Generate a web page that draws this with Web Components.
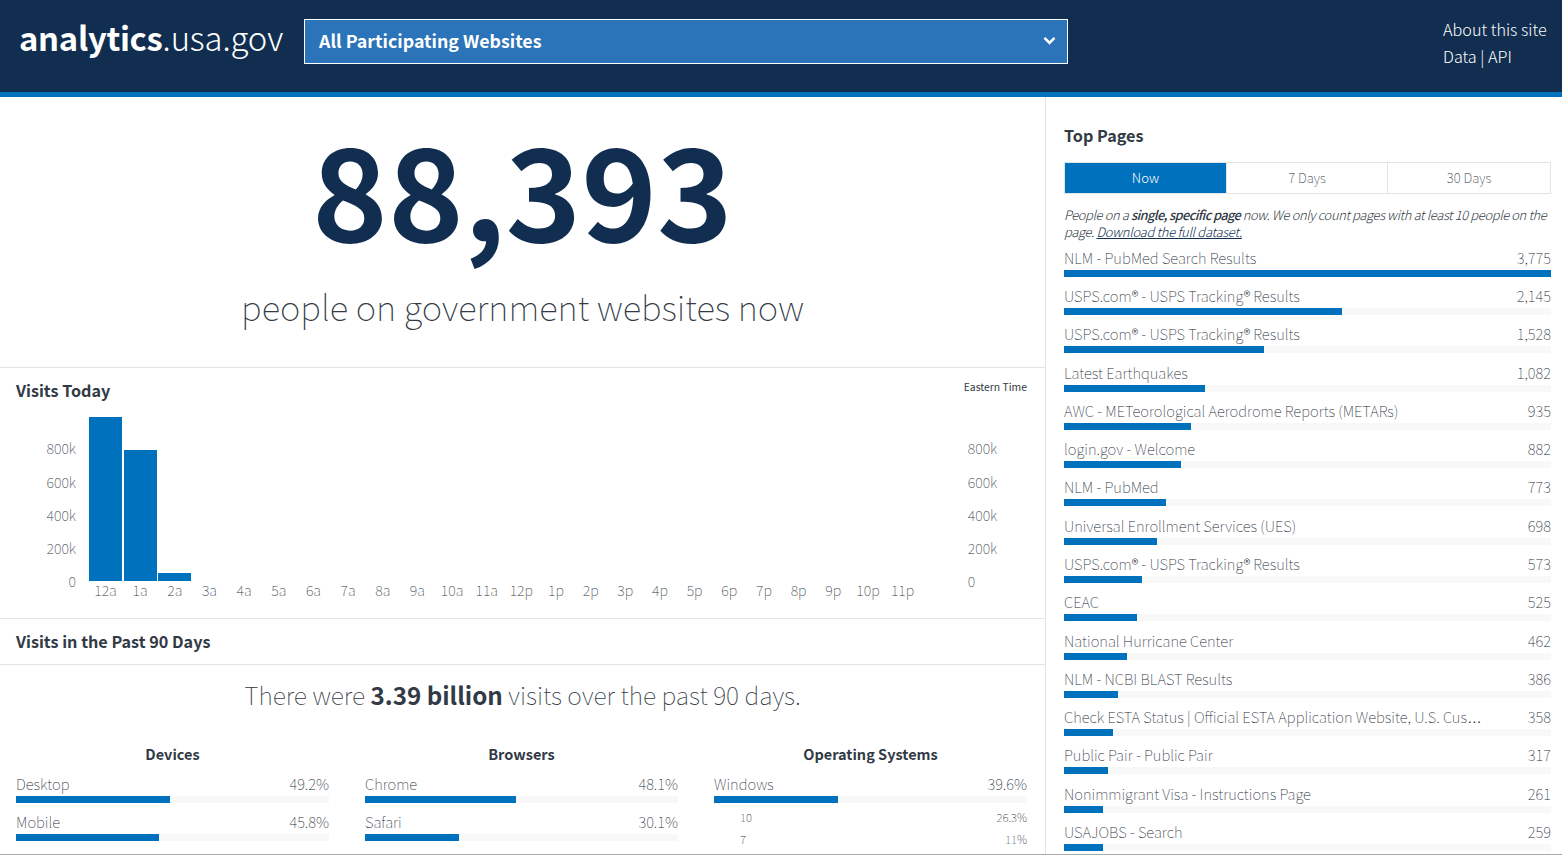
<!DOCTYPE html>
<html lang="en">
<head>
<meta charset="utf-8">
<title>analytics.usa.gov</title>
<style>
  html, body { margin: 0; height: 855px; overflow: hidden; background: #fff; }
  body { font-family: "Noto Sans CJK SC", "Open Sans", sans-serif; color: #323a45; }
</style>
</head>
<body>
<analytics-app></analytics-app>
<script>
const define = (name, css, html, init) => {
  const template = document.createElement('template')
  template.innerHTML = `<style>${css}</style>${html}`
  window.customElements.define(name, class extends HTMLElement {
    constructor () {
      super()
      this.attachShadow({ mode: 'open' })
      this.shadowRoot.appendChild(template.content.cloneNode(true))
    }
    connectedCallback () {
      if (init) init(this, this.shadowRoot)
    }
  })
}

define('site-header', `
  :host { display: flex; height: 92px; border-bottom: 5px solid #0071bc; background: #112e51; color: #fff; padding: 0 15px 0 19px; align-items: flex-start; }
  .logo { font-size: 32.8px; line-height: 40px; margin-top: 17px; width: 285px; white-space: nowrap; font-weight: 300; letter-spacing: -.1px; }
  .logo b { font-weight: 700; letter-spacing: -.3px; }
  .select { box-sizing: border-box; width: 764px; height: 45px; margin-top: 19px; border: 1px solid #fff; background: #2b74b9; display: flex; align-items: center; justify-content: space-between; padding: 0 11px 3px 14px; font-weight: 700; font-size: 17.8px; }
  nav { margin-left: auto; width: 104px; font-size: 16.2px; line-height: 27px; padding-top: 16px; font-weight: 300; white-space: nowrap; }
`, `
  <div class="logo"><b>analytics</b>.usa.gov</div>
  <div class="select"><span>All Participating Websites</span>
    <svg width="13" height="9" viewBox="0 0 13 9"><path d="M1.5 1.8 6.5 6.8 11.5 1.8" fill="none" stroke="#fff" stroke-width="2.6"/></svg>
  </div>
  <nav>About this site<br>Data | API</nav>
`)

define('hero-count', `
  :host { display: block; height: 271px; text-align: center; box-sizing: border-box; border-bottom: 1px solid #e4e4e4; }
  .num { font-size: 128.5px; line-height: 150px; font-weight: 700; color: #112e51; padding-top: 14px; }
  .label { font-size: 34.7px; line-height: 48px; font-weight: 100; margin-top: 21px; color: #323a45; }
`, `
  <div class="num">88,393</div>
  <div class="label">people on government websites now</div>
`)

define('section-title', `
  :host { display: block; font-weight: 700; font-size: 16.2px; line-height: 24px; color: #323a45; }
`, `<slot></slot>`)

define('visits-chart', `
  :host { display: block; height: 251px; box-sizing: border-box; border-bottom: 1px solid #e4e4e4; padding: 10px 16px 0; position: relative; }
  .tz { position: absolute; top: 11px; right: 18px; font-size: 10.4px; line-height: 16px; }
  .plot { display: grid; grid-template-columns: 73px repeat(24, 34.67px) 1fr; margin-top: 13px; height: 164px; font-size: 14.3px; font-weight: 100; color: #323a45; }
  .axis { display: flex; flex-direction: column; justify-content: flex-end; align-items: flex-end; padding-right: 13px; }
  .axis.r { grid-column: 26; align-items: flex-start; padding-left: 47px; padding-right: 0; }
  .axis span { height: 33px; line-height: 33px; transform: translateY(16px); }
  .axis span:first-child { margin-bottom: 1px; }
  .slot { display: flex; align-items: flex-end; padding-right: 1.67px; }
  .slot i { display: block; width: 100%; background: #0071bc; }
  .labels { display: grid; grid-template-columns: 73px repeat(24, 34.67px); margin-top: 1px; font-size: 14.3px; line-height: 20px; font-weight: 100; color: #323a45; text-align: center; }
  .labels span { padding-right: 1.67px; }
`, `
  <section-title>Visits Today</section-title>
  <div class="tz">Eastern Time</div>
  <div class="plot"></div>
  <div class="labels"></div>
`, (el, root) => {
  const ticks = ['800k', '600k', '400k', '200k', '0']
  const heights = [164, 131, 8]
  const hours = ['12a', '1a', '2a', '3a', '4a', '5a', '6a', '7a', '8a', '9a', '10a', '11a', '12p', '1p', '2p', '3p', '4p', '5p', '6p', '7p', '8p', '9p', '10p', '11p']
  const axis = cls => `<div class="axis ${cls}">${ticks.map(t => `<span>${t}</span>`).join('')}</div>`
  root.querySelector('.plot').innerHTML = axis('') +
    hours.map((h, i) => `<div class="slot"><i style="height:${heights[i] || 0}px"></i></div>`).join('') + axis('r')
  root.querySelector('.labels').innerHTML = '<div></div>' + hours.map(h => `<span>${h}</span>`).join('')
})

define('bar-row', `
  :host { display: block; font-weight: 100; color: #29303b; font-size: 14.8px; margin-bottom: var(--row-gap, 0); }
  .row { display: flex; justify-content: space-between; line-height: 20px; height: 22px; }
  .name { white-space: nowrap; }
  .track { height: 7px; background: #f8f8f8; }
  .fill { height: 100%; background: #0071bc; }
  :host([sub]) { font-size: 11.4px; margin-top: -3px; }
  :host([sub]) .row { height: 16px; line-height: 16px; }
  :host([sub]) .name { padding-left: 26px; }
`, `
  <div class="row"><span class="name"><slot></slot></span><span class="val"></span></div>
  <div class="track"><div class="fill"></div></div>
`, (el, root) => {
  root.querySelector('.val').textContent = el.getAttribute('value')
  const track = root.querySelector('.track')
  if (el.hasAttribute('sub')) track.remove()
  else root.querySelector('.fill').style.width = el.getAttribute('pct') + '%'
})

define('breakdown-col', `
  :host { display: block; width: 313px; --row-gap: 9px; }
  h4 { margin: 0 0 10px; font-size: 14.5px; line-height: 20px; font-weight: 700; text-align: center; color: #323a45; }
`, `<h4></h4><slot></slot>`, (el, root) => {
  root.querySelector('h4').textContent = el.getAttribute('title')
})

define('past-visits', `
  :host { display: block; overflow: hidden; }
  .head { padding: 10px 16px 11px; border-bottom: 1px solid #e4e4e4; }
  p { margin: 12px 0 0; text-align: center; font-size: 24.8px; line-height: 34px; font-weight: 100; }
  p b { font-weight: 700; font-size: 24.2px; }
  .cols { display: flex; gap: 36px; padding: 32px 16px 0; }
`, `
  <div class="head"><section-title>Visits in the Past 90 Days</section-title></div>
  <p>There were <b>3.39 billion</b> visits over the past 90 days.</p>
  <div class="cols"><slot></slot></div>
`)

define('top-tabs', `
  :host { display: grid; grid-template-columns: 161px 161px 1fr; border: 1px solid #e4e4e4; height: 30px; font-size: 13.2px; font-weight: 100; color: #29303b; }
  span { display: flex; align-items: center; justify-content: center; border-left: 1px solid #e4e4e4; padding-bottom: 2px; }
  span:first-of-type { background: #0071bc; color: #fff; border-left: 0; font-weight: 300; }
`, `<span>Now</span><span>7 Days</span><span>30 Days</span>`)

define('top-pages', `
  :host { display: block; padding: 26px 11px 0 18px; overflow: hidden; --row-gap: 9.27px; }
  .note { font-size: 12.9px; line-height: 17px; font-style: italic; font-weight: 300; margin: 12px 0 7.85px; letter-spacing: -.35px; }
  .note b { font-weight: 500; letter-spacing: -.65px; }
  .note a { color: #112e51; text-decoration: underline; letter-spacing: -.25px; }
  top-tabs { margin-top: 15px; }
`, `
  <section-title>Top Pages</section-title>
  <top-tabs></top-tabs>
  <div class="note">People on a <b>single, specific page</b> now. We only count pages with at least 10 people on the page. <a>Download the full dataset.</a></div>
  <div class="list"></div>
`, (el, root) => {
  const pages = [
    ['NLM - PubMed Search Results', '3,775', 100],
    ['USPS.com® - USPS Tracking® Results', '2,145', 57],
    ['USPS.com® - USPS Tracking® Results', '1,528', 41],
    ['Latest Earthquakes', '1,082', 29],
    ['AWC - METeorological Aerodrome Reports (METARs)', '935', 26],
    ['login.gov - Welcome', '882', 24],
    ['NLM - PubMed', '773', 21],
    ['Universal Enrollment Services (UES)', '698', 19],
    ['USPS.com® - USPS Tracking® Results', '573', 16],
    ['CEAC', '525', 15],
    ['National Hurricane Center', '462', 13],
    ['NLM - NCBI BLAST Results', '386', 11],
    ['Check ESTA Status | Official ESTA Application Website, U.S. Cus', '358', 10, true],
    ['Public Pair - Public Pair', '317', 9],
    ['Nonimmigrant Visa - Instructions Page', '261', 8],
    ['USAJOBS - Search', '259', 8]
  ]
  const list = root.querySelector('.list')
  pages.forEach(([name, value, pct, cut]) => {
    const row = document.createElement('bar-row')
    row.setAttribute('value', value)
    row.setAttribute('pct', pct)
    row.textContent = name
    if (cut) {
      // the ellipsis glyph of the CJK font sits mid-height, this one on the baseline
      const dots = document.createElement('span')
      dots.style.fontFamily = '"Liberation Sans", sans-serif'
      dots.textContent = '…'
      row.appendChild(dots)
    }
    list.appendChild(row)
  })
})

define('analytics-app', `
  :host { display: block; height: 855px; box-sizing: border-box; border-bottom: 1px solid #aaa; overflow: hidden; }
  main { display: grid; grid-template-columns: 1046px 1fr; height: 758px; }
  .left { border-right: 1px solid #e4e4e4; overflow: hidden; }
`, `
  <site-header></site-header>
  <main>
    <div class="left">
      <hero-count></hero-count>
      <visits-chart></visits-chart>
      <past-visits>
        <breakdown-col title="Devices">
          <bar-row value="49.2%" pct="49.2">Desktop</bar-row>
          <bar-row value="45.8%" pct="45.8">Mobile</bar-row>
        </breakdown-col>
        <breakdown-col title="Browsers">
          <bar-row value="48.1%" pct="48.1">Chrome</bar-row>
          <bar-row value="30.1%" pct="30.1">Safari</bar-row>
        </breakdown-col>
        <breakdown-col title="Operating Systems">
          <bar-row value="39.6%" pct="39.6">Windows</bar-row>
          <bar-row sub value="26.3%">10</bar-row>
          <bar-row sub value="11%">7</bar-row>
        </breakdown-col>
      </past-visits>
    </div>
    <top-pages></top-pages>
  </main>
`)
</script>
</body>
</html>
